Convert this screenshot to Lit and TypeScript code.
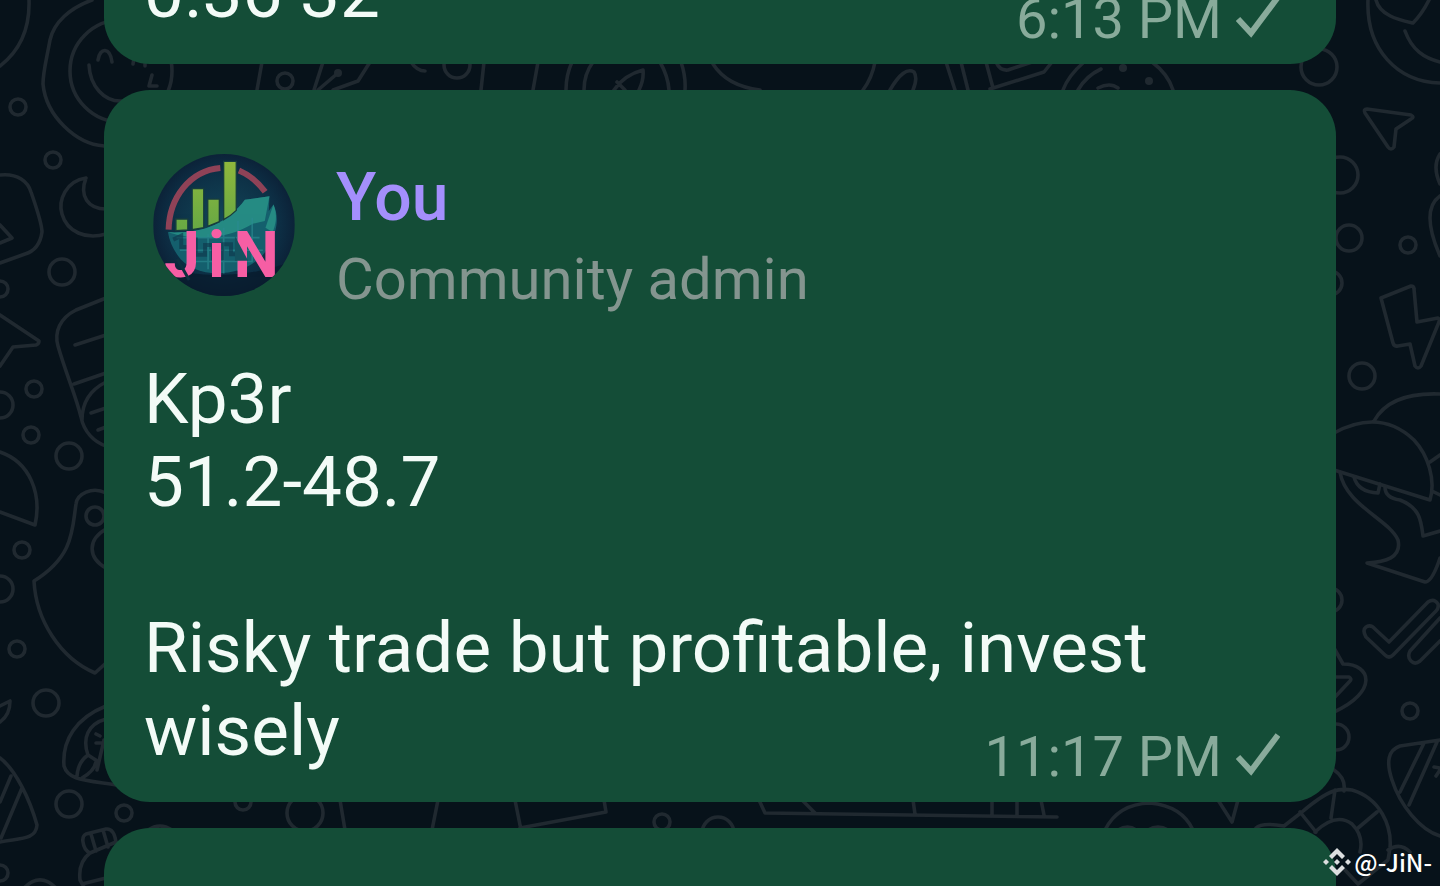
import { LitElement, html, css, svg } from "lit";
import { customElement, property } from "lit/decorators.js";

const doodles = [
  "M29 0C30 30 18 52 0 66M92 0C70 8 54 22 50 40C46 62 43 72 43 84C46 116 76 144 104 146",
  "M98 60C100 47 110 47 112 62M89 65C90 86 104 102 122 101M133 64l1-6M145 62v4M152 75L149 86h8",
  "M262 62L257 90M323 62L314 90M318 90L338 73M370 62L358 81L333 90M411 62q6 9 14 9",
  "M484 62L481 90M538 62L533 90M572 62Q566 75 566 90M593 62Q584 74 584 90M614 90Q624 75 643 70Q644 80 639 90M617 82l8 8M660 62Q668 76 669 90M681 62Q686 77 685 90M713 64Q727 86 760 90M875 62Q872 78 863 90M890 90Q904 66 914 72Q918 78 913 90M946 62L955 90",
  "M961 62L968 90M986 62L993 88M996 62q4 9 12 8L1038 60M990 89L1044 72L1052 62M1063 90Q1068 76 1084 62M1078 90Q1086 76 1101 69M1152 62Q1168 74 1173 90M1098 88Q1110 82 1118 88",
  "M86 178C66 181 58 200 62 214C67 232 86 240 106 234M86 178C79 196 88 209 106 209",
  "M0 175C18 173 28 182 31 192C38 212 42 224 42 232C40 246 32 252 25 254L0 263M0 225L12 238L0 243",
  "M0 315L39 341Q39 344 36 345L13 347L0 366",
  "M106 298L76 310C60 318 54 332 58 346C66 374 76 396 81 417C84 432 94 442 106 446M75 345L106 335M74 384L106 373M106 382Q82 394 82 420M91 413L106 408M98 430l8-3",
  "M0 452C30 462 42 494 35 525L0 512",
  "M106 493C92 486 77 494 76 504C72 530 74 556 34 581C36 620 60 658 95 673L106 663M106 529C87 540 88 558 106 568",
  "M0 706L10 701Q10 715 0 722M106 706C76 718 62 740 64 766C68 780 84 780 116 785M106 719C88 724 82 738 88 755Q78 762 77 776M88 755q6 4 8 5q0 10-14 18M97 770L104 740M96 734l4 2M96 743h6",
  "M0 758C16 770 30 800 37 825C36 840 20 838 0 842M11 776L0 802M22 788L1 838",
  "M86 834L106 829Q114 828 116 842L90 853Q84 850 83 842Q82 836 86 834ZM91 834l5 17M103 830l5 17M90 853Q78 862 80 880L84 887M82 884L106 878M24 888Q40 872 56 888",
  "M340 800L345 830M438 800L432 830M515 800L521 830M148 830q12-8 24 0M520 828L606 812L604 800",
  "M759 800L765 813L1057 817M802 800L815 813M913 800L915 814M992 800v14M1017 800v15M1041 800l3 15",
  "M1105 830Q1118 804 1150 803Q1182 806 1193 830M1118 830q10-6 18 0M1148 830q10-6 20 0M1218 800L1232 822L1238 800",
  "M1368 0C1366 50 1398 82 1440 83M1376 0C1380 16 1400 20 1413 23Q1422 14 1429 0M1405 31C1412 50 1424 58 1440 62",
  "M1367 109L1411 115Q1415 117 1411 119L1396 129L1394 147Q1391 151 1388 147L1365 113Q1363 109 1367 109Z",
  "M1440 154Q1432 166 1440 184M1440 196Q1420 210 1440 256",
  "M1381 298L1411 286Q1414 286 1414 289L1417 322L1438 318Q1440 319 1439 322L1421 366Q1418 370 1415 366L1410 344L1398 346Q1394 347 1393 343Z",
  "M1374 421Q1390 392 1440 394M1334 433Q1380 408 1414 440C1428 455 1436 480 1430 500L1334 470M1430 462l10-7M1434 492l6 3",
  "M1340 472C1345 505 1390 520 1398 540C1402 558 1385 562 1367 563L1425 582Q1432 582 1440 558M1354 477Q1358 492 1378 493L1380 484M1385 487Q1385 498 1400 500C1420 508 1421 520 1423 536L1440 531",
  "M1366 637Q1362 630 1366 627Q1371 624 1375 629L1389 642L1428 602Q1434 598 1438 604Q1439 608 1436 611L1393 655Q1389 659 1385 655ZM1440 618L1410 651Q1407 657 1411 661Q1415 665 1420 661L1440 641",
  "M1334 648L1343 664C1372 664 1378 692 1334 712M1334 677L1349 677Q1352 679 1350 681L1334 698M1334 770Q1346 778 1344 791",
  "M1440 740L1400 746C1388 750 1386 762 1392 780C1400 805 1420 830 1440 836M1424 743L1400 792M1437 742L1409 805M1434 767l6 1M1436 776l4-6",
  "M1256 828Q1262 822 1284 826L1302 812C1330 788 1340 788 1352 790C1380 798 1392 826 1390 848L1388 860L1358 884L1345 870M1315 832Q1336 812 1352 824Q1364 836 1360 852M1335 790L1331 818M1377 812L1358 828M1300 812L1316 832M1388 850q12-8 22 2",
];

const rings: [number, number, number][] = [
  [121, 71, 51], [18, 107, 8], [285, 81, 8], [457, 65, 13], [1319, 67, 18],
  [53, 160, 8], [62, 272, 13], [0, 289, 8], [34, 389, 8], [0, 405, 13],
  [31, 435, 8], [69, 456, 13], [22, 550, 8], [0, 589, 13], [95, 516, 9],
  [17, 649, 8], [46, 703, 13], [69, 804, 13], [124, 813, 8], [0, 873, 8],
  [243, 802, 8], [305, 813, 18], [662, 822, 8], [718, 833, 16], [1340, 175, 18],
  [1349, 238, 13], [1408, 245, 8], [1330, 283, 12], [1362, 376, 13],
  [1330, 600, 12], [1410, 711, 8], [1336, 737, 13],
];

const dots: [number, number][] = [[338, 73], [1123, 68], [1149, 81]];

@customElement("chat-wallpaper")
class ChatWallpaper extends LitElement {
  static styles = css`
    :host { display: block; }
    .art { display: block; width: 100%; height: 100%; }
    .lines { fill: none; stroke: #202930; stroke-width: 3.6; stroke-linecap: round; stroke-linejoin: round; }
    .dot { fill: #202930; }
  `;
  render() {
    return html`<svg class="art" viewBox="0 0 1440 886" preserveAspectRatio="xMidYMid slice" aria-hidden="true">
      <g class="lines">
        ${doodles.map((d) => svg`<path d=${d}></path>`)}
        ${rings.map(([x, y, r]) => svg`<circle cx=${x} cy=${y} r=${r}></circle>`)}
      </g>
      ${dots.map(([x, y]) => svg`<circle class="dot" cx=${x} cy=${y} r="4"></circle>`)}
    </svg>`;
  }
}

@customElement("jin-avatar")
class JinAvatar extends LitElement {
  static styles = css`
    :host { display: block; }
    .pic { display: block; width: 142px; height: 142px; border-radius: 50%; }
    .word { font: 700 194px "Roboto", sans-serif; fill: #f65ea4; }
  `;
  render() {
    return html`<svg class="pic" viewBox="40 28 426 428" role="img" aria-label="JiN">
      <defs>
        <radialGradient id="night" cx="0.5" cy="0.5" r="0.55">
          <stop offset="0" stop-color="#12485a"></stop>
          <stop offset="0.7" stop-color="#0d2f45"></stop>
          <stop offset="1" stop-color="#0b1d33"></stop>
        </radialGradient>
        <linearGradient id="lime" x1="0" y1="0" x2="0" y2="1">
          <stop offset="0" stop-color="#8fb83c"></stop>
          <stop offset="1" stop-color="#67a844"></stop>
        </linearGradient>
      </defs>
      <rect x="40" y="28" width="426" height="428" fill="url(#night)"></rect>
      <path d="M40 360Q250 430 466 350V456H40Z" fill="#091a2b" opacity="0.7"></path>
      <path d="M86 256C88 160 150 78 242 70M298 78Q345 98 377 142" fill="none" stroke="#8f4257" stroke-width="18"></path>
      <path d="M84 264C190 268 260 240 316 166L390 155L388 200L402 180C422 220 410 268 390 300C350 400 170 420 112 332Q90 300 84 264Z" fill="#15606d"></path>
      <path d="M84 264C190 268 260 240 316 166L390 155L376 230L340 238C290 268 200 300 84 264Z" fill="#258b83"></path>
      <path d="M378 250L402 180C416 214 408 240 400 264Z" fill="#258b83"></path>
      <path d="M110 280h250M120 318h250M150 352h190M205 270v105M252 250v138M295 230v150M338 220v130" stroke="#2a8b91" stroke-width="5" opacity="0.65"></path>
      <path d="M100 286l24-12v34h24v-22h20v46h28v-30h24v40h28v-42h26v30h30v-48" fill="none" stroke="#0d3449" stroke-width="12" opacity="0.6"></path>
      <g fill="url(#lime)" stroke="#173d3e" stroke-width="4">
        <path d="M108 224h36v33l-36 2ZM157 132h35v118l-35 6ZM204 164h35v68l-35 14ZM252 50h38v148q-18 18-38 28Z"></path>
      </g>
      <g class="word">
        <text x="72" y="400">J</text>
        <text x="205" y="400">i</text>
        <text x="282" y="400">N</text>
      </g>
      <path d="M112 344L148 408" stroke="#0d3040" stroke-width="9"></path>
      <path d="M286 276L326 350H286Z" fill="#14525f"></path>
    </svg>`;
  }
}

@customElement("chat-message")
class ChatMessage extends LitElement {
  @property() text = "";
  @property() time = "";
  @property() author = "";
  @property() badge = "";

  static styles = css`
    :host { display: block; }
    .bubble {
      box-sizing: border-box;
      padding: 64px 56px 13px 40px;
      border-radius: 46px;
      background: #144d37;
      color: #f3fbf7;
    }
    .head { display: flex; align-items: flex-start; gap: 41px; margin: 0 0 61px 9px; }
    .names { display: flex; flex-direction: column; height: 142px; padding-top: 4px; box-sizing: border-box; }
    .name { font-size: 66px; font-weight: 500; line-height: 80px; color: #a48ffc; }
    .badge { font-size: 58px; line-height: 82px; color: #84958f; }
    .body { display: grid; }
    .text { grid-area: 1 / 1; margin: 0 0 17px; font-size: 71px; line-height: 83px; white-space: pre-line; }
    .meta {
      grid-area: 1 / 1;
      align-self: end;
      justify-self: end;
      display: flex;
      align-items: flex-start;
      gap: 14px;
      font-size: 56px;
      line-height: 64px;
      color: #89ab9b;
    }
    .tick { display: block; width: 44px; height: 44px; margin-top: 7px; }
  `;
  render() {
    return html`<article class="bubble">
      ${this.author
        ? html`<header class="head">
            <jin-avatar></jin-avatar>
            <div class="names">
              <span class="name">${this.author}</span>
              <span class="badge">${this.badge}</span>
            </div>
          </header>`
        : ""}
      ${this.text
        ? html`<div class="body">
            <p class="text">${this.text}</p>
            <div class="meta">
              <time>${this.time}</time>
              <svg class="tick" viewBox="0 0 44 44" role="img" aria-label="Sent">
                <path d="M2 25L15 39L42 3" fill="none" stroke="currentColor" stroke-width="6"></path>
              </svg>
            </div>
          </div>`
        : ""}
    </article>`;
  }
}

@customElement("app-root")
class AppRoot extends LitElement {
  static styles = css`
    :host { display: block; font-family: "Roboto", sans-serif; }
    .screen { position: relative; height: 100vh; overflow: hidden; background: #07121a; }
    .wallpaper { position: absolute; inset: 0; }
    .thread {
      position: relative;
      display: flex;
      flex-direction: column;
      gap: 26px;
      margin-top: -113px;
      padding: 0 104px;
    }
    .next { flex: none; min-height: 100px; }
    .credit {
      position: absolute;
      right: 8px;
      bottom: 6px;
      display: flex;
      align-items: center;
      gap: 3px;
      font-family: "Noto Sans CJK SC", sans-serif;
      font-size: 24px;
      font-weight: 500;
      line-height: 36px;
      color: #fff;
    }
    .logo { display: block; width: 28px; height: 28px; }
  `;
  render() {
    return html`<main class="screen">
      <chat-wallpaper class="wallpaper"></chat-wallpaper>
      <section class="thread">
        <chat-message .text=${"0.36 32"} .time=${"6:13 PM"}></chat-message>
        <chat-message
          .author=${"You"}
          .badge=${"Community admin"}
          .text=${"Kp3r\n51.2-48.7\n\nRisky trade but profitable, invest wisely"}
          .time=${"11:17 PM"}
        ></chat-message>
        <chat-message .text=${"\u00a0"}></chat-message>
      </section>
      <div class="credit">
        <svg class="logo" viewBox="0 0 28 28" aria-hidden="true">
          <g fill="#dcdedf">
            <path d="M14 0L22 8L19 11L14 6L9 11L6 8Z"></path>
            <path d="M14 28L22 20L19 17L14 22L9 17L6 20Z"></path>
            <path d="M14 11L17 14L14 17L11 14Z"></path>
            <path d="M3 11L6 14L3 17L0 14Z"></path>
            <path d="M25 11L28 14L25 17L22 14Z"></path>
          </g>
        </svg>
        <span>@-JiN-</span>
      </div>
    </main>`;
  }
}
